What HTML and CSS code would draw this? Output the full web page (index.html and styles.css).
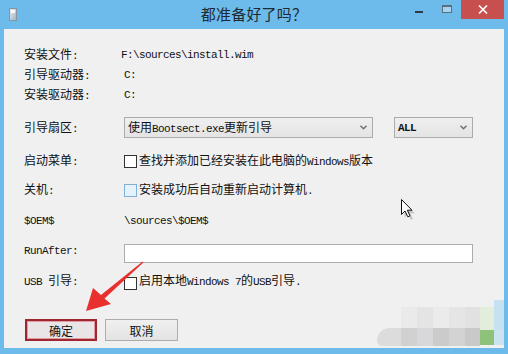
FILE: index.html
```html
<!DOCTYPE html>
<html lang="zh">
<head>
<meta charset="utf-8">
<title>都准备好了吗？</title>
<link rel="stylesheet" href="styles.css">
</head>
<body>
<div class="win">
  <div class="titlebar">
    <div class="tb-left">
      <svg class="appicon" width="8" height="13" viewBox="0 0 8 13">
        <defs><linearGradient id="ig" x1="0" y1="0" x2="1" y2="1"><stop offset="0" stop-color="#e9eef2"/><stop offset="1" stop-color="#9fb0bd"/></linearGradient></defs>
        <rect x="0.5" y="0.5" width="7" height="12" fill="url(#ig)" stroke="#8796a3" stroke-width="1"/>
        <rect x="2" y="2" width="4" height="3" fill="#f7f9fb"/>
      </svg>
    </div>
    <div class="title">都准备好了吗？</div>
    <div class="tb-right">
      <span class="btn-min"></span>
      <span class="btn-max"></span>
      <span class="btn-close">
        <svg width="10" height="9" viewBox="0 0 10 9"><path d="M1 0.5 L9 8.5 M9 0.5 L1 8.5" stroke="#fff" stroke-width="1.6" fill="none"/></svg>
      </span>
    </div>
  </div>
  <div class="client">
    <div class="row">
      <div class="lbl">安装文件<span class="m">:</span></div>
      <div class="val m shift">F:\sources\install.wim</div>
    </div>
    <div class="row">
      <div class="lbl">引导驱动器<span class="m">:</span></div>
      <div class="val m">C:</div>
    </div>
    <div class="row">
      <div class="lbl">安装驱动器<span class="m">:</span></div>
      <div class="val m">C:</div>
    </div>
    <div class="row row-sel">
      <div class="lbl">引导扇区<span class="m">:</span></div>
      <div class="select sel1">
        <span class="sel-text">使用<span class="m">Bootsect.exe</span>更新引导</span>
        <svg class="chev" width="7" height="5" viewBox="0 0 7 5"><path d="M0.5 0.8 L3.5 3.8 L6.5 0.8" stroke="#6d6d6d" stroke-width="1.4" fill="none"/></svg>
      </div>
      <div class="select sel2">
        <span class="sel-text m all">ALL</span>
        <svg class="chev" width="7" height="5" viewBox="0 0 7 5"><path d="M0.5 0.8 L3.5 3.8 L6.5 0.8" stroke="#6d6d6d" stroke-width="1.4" fill="none"/></svg>
      </div>
    </div>
    <div class="row row-menu">
      <div class="lbl">启动菜单<span class="m">:</span></div>
      <span class="cb"></span>
      <span class="cb-text">查找并添加已经安装在此电脑的<span class="m">Windows</span>版本</span>
    </div>
    <div class="row row-off">
      <div class="lbl">关机<span class="m">:</span></div>
      <span class="cb cb-hover"></span>
      <span class="cb-text">安装成功后自动重新启动计算机<span class="m">.</span></span>
    </div>
    <div class="row row-oem">
      <div class="lbl m">$OEM$</div>
      <div class="val m">\sources\$OEM$</div>
    </div>
    <div class="row row-run">
      <div class="lbl lbl-top m">RunAfter:</div>
      <div class="input"></div>
    </div>
    <div class="row row-usb">
      <div class="lbl"><span class="m">USB </span>引导<span class="m">:</span></div>
      <span class="cb cb-low"></span>
      <span class="cb-text">启用本地<span class="m">Windows 7</span>的<span class="m">USB</span>引导<span class="m">.</span></span>
    </div>
    <div class="buttons">
      <div class="button ok">确定</div>
      <div class="button cancel">取消</div>
    </div>
  </div>
</div>

<div class="wm">
  <span class="px" style="left:401px;top:307px;width:16px;height:23px;background:#eaeaea"></span>
  <span class="px" style="left:417px;top:307px;width:16px;height:23px;background:#e4e4e5"></span>
  <span class="px" style="left:433px;top:307px;width:16px;height:23px;background:#ebebeb"></span>
  <span class="px" style="left:449px;top:307px;width:16px;height:23px;background:#e5e5e6"></span>
  <span class="px" style="left:465px;top:307px;width:15px;height:23px;background:#e1e1e2"></span>
  <span class="px" style="left:480px;top:307px;width:14px;height:23px;background:#e2eddb"></span>
  <span class="px" style="left:494px;top:300px;width:10px;height:30px;background:#c6e1f0"></span>
  <span class="px blob" style="left:377px;top:328px;width:24px;height:18px;background:#dcdcdc"></span>
  <span class="px" style="left:401px;top:328px;width:16px;height:18px;background:#d1d1d1"></span>
  <span class="px" style="left:417px;top:328px;width:16px;height:18px;background:#d8d8da"></span>
  <span class="px" style="left:433px;top:328px;width:16px;height:18px;background:#cbcbcb"></span>
  <span class="px" style="left:449px;top:328px;width:16px;height:18px;background:#d3d3d3"></span>
  <span class="px" style="left:465px;top:328px;width:15px;height:18px;background:#c9c9c9"></span>
  <span class="px" style="left:480px;top:330px;width:14px;height:15px;background:#8ec27a"></span>
  <span class="px" style="left:494px;top:330px;width:10px;height:15px;background:#cbe3ef"></span>
</div>

<svg class="overlay" width="508" height="354" viewBox="0 0 508 354">
  <polygon points="86,311 93,288 101,295 142.6,261.4 143.4,262.6 104.5,298.5 111,304" fill="#e8302e"/>
  <g transform="translate(401.5,199.5)">
    <path d="M1.5 1.5 L1.5 16.5 L5 13 L7.8 18.8 L10 17.8 L7.3 12.2 L12 12.2 Z" fill="#000" opacity="0.18" transform="translate(1.5,1.5)"/>
    <path d="M0 0 L0 15 L3.5 11.5 L6.3 17.3 L8.5 16.3 L5.8 10.7 L10.5 10.7 Z" fill="#fff" stroke="#111" stroke-width="1" stroke-linejoin="round"/>
  </g>
</svg>
</body>
</html>
```

FILE: styles.css
```css
* { box-sizing: border-box; }
html, body { margin: 0; padding: 0; }
body {
  width: 508px;
  height: 354px;
  overflow: hidden;
  position: relative;
  background: #6cbbea;
  font-family: "Noto Sans CJK SC", sans-serif;
  font-size: 12px;
  color: #111;
}
.m {
  font-family: "Liberation Mono", "Noto Sans CJK SC", monospace;
  font-size: 11px;
  letter-spacing: -0.6px;
}
.win {
  width: 508px;
  height: 354px;
  display: flex;
  flex-direction: column;
}
.titlebar {
  height: 29px;
  display: grid;
  grid-template-columns: 1fr auto 1fr;
  align-items: start;
}
.tb-left { padding: 8px 0 0 9px; }
.appicon { display: block; }
.title {
  font-size: 15px;
  line-height: 29px;
  color: #1d2a33;
  letter-spacing: 0.2px;
  margin-top: -1px;
}
.tb-right {
  display: flex;
  justify-content: flex-end;
  align-items: flex-start;
  padding-right: 4px;
}
.btn-min {
  width: 8px;
  height: 2px;
  margin-top: 11px;
  margin-right: 19px;
  background: #2d3a44;
}
.btn-max {
  width: 10px;
  height: 8px;
  margin-top: 5px;
  margin-right: 9px;
  border: 1px solid #5a6e7c;
  border-top-width: 2px;
  background: #a7d4f1;
}
.btn-close {
  width: 43px;
  height: 19px;
  background: #c7504f;
  display: flex;
  align-items: center;
  justify-content: center;
}
.client {
  margin-left: 4px;
  width: 500px;
  height: 319px;
  background: #f0f0f0;
  padding: 16px 0 0 20px;
  display: flex;
  flex-direction: column;
}
.row {
  display: flex;
  align-items: center;
  height: 20px;
  line-height: 14px;
}
.lbl { width: 100px; flex: none; }
.val.shift { margin-left: -3px; }
.row-sel { height: 21px; margin-top: 12px; }
.row-menu { margin-top: 13px; }
.row-off { margin-top: 9px; }
.row-oem { margin-top: 11px; }
.row-run { height: 19px; margin-top: 13px; align-items: flex-start; }
.lbl-top { margin-top: 0; }
.row-usb { margin-top: 8px; }
.select {
  height: 21px;
  border: 1px solid #acacac;
  background: linear-gradient(#efefef, #e4e4e4);
  display: flex;
  align-items: center;
  padding: 0 5px 0 3px;
}
.sel1 { width: 249px; }
.sel2 { width: 79px; margin-left: 21px; padding-left: 3px; }
.sel-text { white-space: nowrap; }
.all { font-weight: bold; }
.chev { margin-left: auto; display: block; }
.cb {
  width: 13px;
  height: 13px;
  border: 1px solid #333;
  background: #fff;
  flex: none;
  margin-right: 2px;
}
.cb-hover { border-color: #7fb0d8; background: #e6f2fb; }
.cb-low { margin-top: 4px; }
.cb-text { white-space: nowrap; }
.input {
  width: 349px;
  height: 19px;
  border: 1px solid #abadb3;
  background: #fff;
}
.buttons {
  display: flex;
  gap: 8px;
  margin-top: 28px;
  margin-left: 1px;
}
.button {
  height: 22px;
  display: flex;
  align-items: center;
  justify-content: center;
  font-size: 12px;
}
.ok {
  width: 72px;
  border: 2px solid #9e2630;
  box-shadow: inset 0 0 0 1px #e39aa0;
  background: #e9e5e6;
}
.cancel {
  width: 73px;
  border: 1px solid #acacac;
  background: linear-gradient(#f0f0f0, #e3e3e3);
}
.wm { position: absolute; left: 0; top: 0; width: 508px; height: 354px; pointer-events: none; }
.px { position: absolute; display: block; }
.blob { border-radius: 14px 0 0 6px; }
.overlay { position: absolute; left: 0; top: 0; pointer-events: none; }
```
